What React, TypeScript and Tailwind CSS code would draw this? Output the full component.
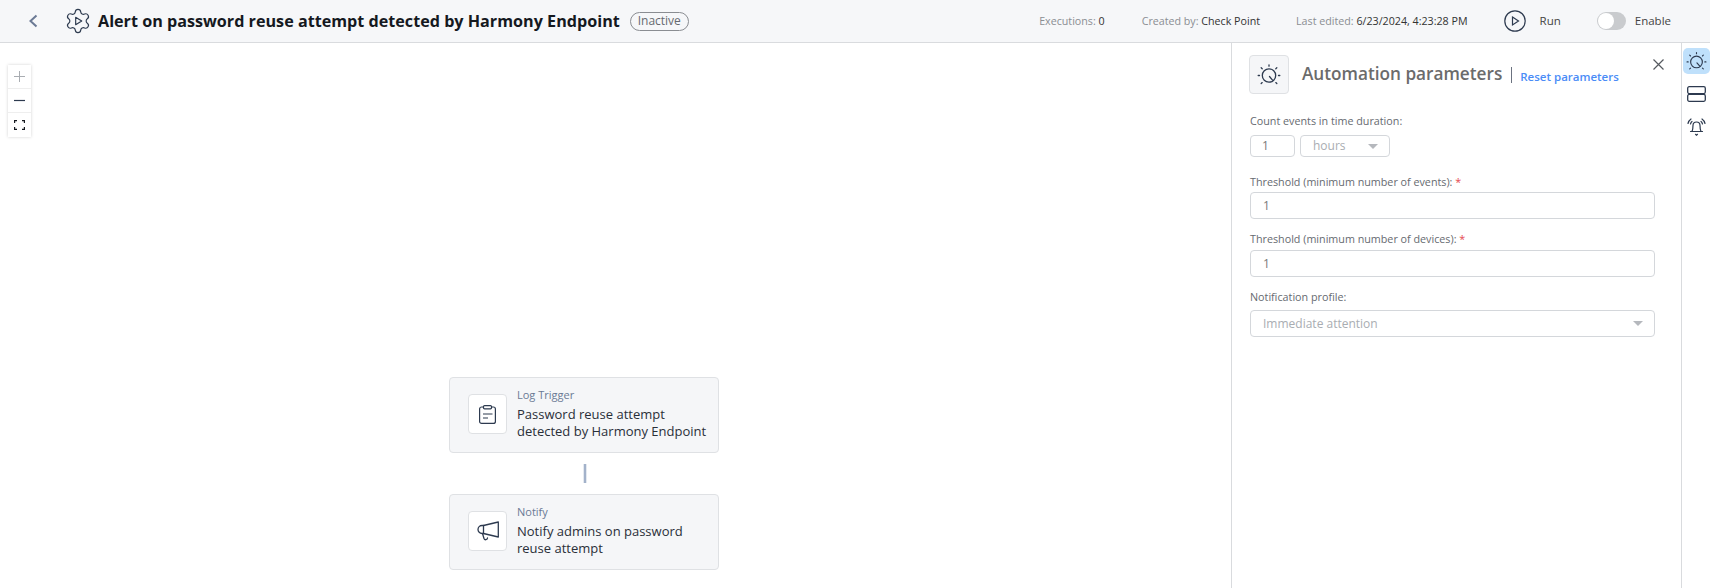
import React from "react";

const Knob = ({ size = 24 }: { size?: number }) => (
  <svg width={size} height={size} viewBox="0 0 24 24" fill="none" stroke="#2d3a4f" strokeWidth="1.3" strokeLinecap="round">
    <circle cx="12" cy="12.500" r="6.700" />
    <path d="M12.500 13.500l3 3.600" />
    <path d="M12 1.800v1.400M4.200 4.800l1 .9M19.800 4.800l-1 .9M1.200 12.500h1.300M21.500 12.500h1.300M4.200 20.500l1-.9M19.800 20.500l-1-.9" />
  </svg>
);

const Field = ({ children }: { children: React.ReactNode }) => (
  <div className="h-[27px] border border-[#d4d7db] rounded-[4px] bg-white flex items-center pl-[12px] text-[12px] text-[#7a7a7a]">
    {children}
  </div>
);

const Caret = () => <span className="w-0 h-0 border-x-[5px] border-x-transparent border-t-[5px] border-t-[#b5b8bd]" />;

const Label = ({ className, children }: { className: string; children: React.ReactNode }) => (
  <div className={`text-[10.75px] leading-[16px] text-[#666a70] whitespace-nowrap ${className}`}>{children}</div>
);

const Node = ({ type, title, icon }: { type: string; title: React.ReactNode; icon: React.ReactNode }) => (
  <div className="w-[270px] h-[76px] bg-[#f5f6f8] border border-[#dfe1e4] rounded-[4px] flex pl-[18px] pt-[16px]">
    <div className="w-[39px] h-[40px] bg-white border border-[#dfe1e4] rounded-[4px] flex items-center justify-center shrink-0">{icon}</div>
    <div className="ml-[10px] -mt-[8px]">
      <div className="text-[11px] leading-[16px] text-[#6b7a95] mt-[1px]">{type}</div>
      <div className="text-[13px] leading-[17.300px] text-[#2a2f38] font-medium mt-[3px] whitespace-nowrap">{title}</div>
    </div>
  </div>
);

export default function App() {
  return (
    <div className="w-[1710px] h-[588px] overflow-hidden bg-white flex flex-col font-['Open_Sans','Noto_Sans',sans-serif]">
      <header className="h-[43px] shrink-0 bg-[#f6f7f9] border-b border-[#d9dbde] flex items-center">
        <svg className="ml-[28px]" width="10" height="14" viewBox="0 0 10 14" fill="none" stroke="#6b7a95" strokeWidth="2">
          <path d="M8.500 1.500L2.500 7l6 5.500" />
        </svg>
        <svg className="ml-[26px]" width="28" height="28" viewBox="0 0 24 24" fill="none" stroke="#2d3a4f" strokeWidth="1" strokeLinejoin="round">
          <path d="M9.671 4.136a2.340 2.340 0 0 1 4.659 0 2.340 2.340 0 0 0 3.319 1.915 2.340 2.340 0 0 1 2.330 4.033 2.340 2.340 0 0 0 0 3.831 2.340 2.340 0 0 1-2.330 4.033 2.340 2.340 0 0 0-3.319 1.915 2.340 2.340 0 0 1-4.659 0 2.340 2.340 0 0 0-3.320-1.915 2.340 2.340 0 0 1-2.330-4.033 2.340 2.340 0 0 0 0-3.831A2.340 2.340 0 0 1 6.350 6.051a2.340 2.340 0 0 0 3.319-1.915" />
          <path d="M10 8.800l5.200 3.200-5.200 3.200z" />
        </svg>
        <h1 className="ml-[6px] text-[16.170px] font-bold text-[#15191f] whitespace-nowrap">Alert on password reuse attempt detected by Harmony Endpoint</h1>
        <span className="ml-[10px] h-[19px] w-[59px] justify-center flex items-center rounded-full border border-[#8a8d92] text-[12px] text-[#666a70]">Inactive</span>
        <div className="ml-auto flex items-center text-[10.700px] text-[#8b8e93]">
          <span>Executions: <span className="text-[#333]">0</span></span>
          <span className="ml-[37px]">Created by: <span className="text-[#333]">Check Point</span></span>
          <span className="ml-[36px]">Last edited: <span className="text-[#333]">6/23/2024, 4:23:28 PM</span></span>
        </div>
        <svg className="ml-[36px]" width="22" height="22" viewBox="0 0 22 22" fill="none" stroke="#2d3a4f" strokeWidth="1.200">
          <circle cx="11" cy="11" r="10.200" />
          <path d="M8.500 7l6 4-6 4z" />
        </svg>
        <span className="ml-[14px] text-[11.500px] text-[#444]">Run</span>
        <span className="ml-[36px] w-[29px] h-[18px] rounded-full bg-[#c9cbce] relative">
          <span className="absolute left-[1px] top-[1px] w-[16px] h-[16px] rounded-full bg-white" />
        </span>
        <span className="ml-[9px] mr-[39px] text-[11.500px] text-[#444]">Enable</span>
      </header>

      <div className="flex-1 flex min-h-0">
        <main className="w-[1231px] relative">
          <div className="absolute left-[8px] top-[22px] w-[23px] bg-white shadow-[0_0_3px_rgba(0,0,0,0.18)] flex flex-col items-center">
            <div className="h-[24px] w-full flex items-center justify-center border-b border-[#eeeeee]">
              <svg width="11" height="11" viewBox="0 0 11 11" stroke="#a9adb2" strokeWidth="1"><path d="M5.500 0v11M0 5.500h11" /></svg>
            </div>
            <div className="h-[24px] w-full flex items-center justify-center border-b border-[#eeeeee]">
              <svg width="11" height="11" viewBox="0 0 11 11" stroke="#2d3a4f" strokeWidth="1.200"><path d="M0 5.500h11" /></svg>
            </div>
            <div className="h-[24px] w-full flex items-center justify-center">
              <svg width="11" height="10" viewBox="0 0 11 10" fill="none" stroke="#15191f" strokeWidth="1.200"><path d="M0.600 3V.6H3M8 .6h2.400V3M10.400 7v2.400H8M3 9.400H.6V7" /></svg>
            </div>
          </div>
          <div className="ml-[449px] pt-[334px] flex flex-col">
            <Node
              type="Log Trigger"
              title={<>Password reuse attempt<br />detected by Harmony Endpoint</>}
              icon={
                <svg width="17" height="19" viewBox="0 0 17 19" fill="none" stroke="#2d3a4f" strokeWidth="1.200">
                  <rect x="0.600" y="2" width="15.800" height="16.400" rx="2" />
                  <rect x="4.500" y="0.600" width="8" height="3.200" rx="1" fill="#ffffff" />
                  <path d="M4 9h9.500M4 13h5" />
                </svg>
              }
            />
            <div className="ml-[134px] w-[4px] h-[19px] my-[11px] bg-[#a3b2ca] border-x border-[#e4e9f0]" />
            <Node
              type="Notify"
              title={<>Notify admins on password<br />reuse attempt</>}
              icon={
                <svg width="22" height="20" viewBox="0 0 22 20" fill="none" stroke="#2d3a4f" strokeWidth="1.300" strokeLinejoin="round" strokeLinecap="round">
                  <path d="M21.300 1v15L6.500 12.500H5a4 4 0 0 1 0-8h1.500z" />
                  <path d="M6.500 4.500v8M5.500 12.500l1.500 5a1.800 1.800 0 0 0 3.500-.5" />
                </svg>
              }
            />
          </div>
        </main>

        <aside className="w-[451px] border-x border-[#d9dbde] pl-[18px] pr-[26px] pt-[12px] relative">
          <div className="flex items-start -ml-[1px]">
            <div className="w-[40px] h-[39px] bg-[#f5f6f8] border border-[#dfe1e4] rounded-[4px] flex items-center justify-center"><Knob /></div>
            <span className="ml-[13px] mt-[6px] text-[17.200px] font-semibold text-[#6b6b6b] whitespace-nowrap">Automation parameters</span>
            <span className="ml-[9px] mt-[12px] w-[1px] h-[16px] bg-[#6b7280]" />
            <span className="ml-[8px] mt-[13px] text-[11.500px] font-semibold text-[#4a8cf7] whitespace-nowrap">Reset parameters</span>
          </div>
          <svg className="absolute right-[16px] top-[15px]" width="13" height="13" viewBox="0 0 13 13" stroke="#55595f" strokeWidth="1.200"><path d="M1.500 1.500l10 10M11.500 1.500l-10 10" /></svg>

          <Label className="mt-[19px]">Count events in time duration:</Label>
          <div className="mt-[6px] flex gap-[5px]">
            <div className="w-[45px] h-[22px] border border-[#d4d7db] rounded-[4px] flex items-center pl-[11px] text-[12px] text-[#7a7a7a]">1</div>
            <div className="w-[90px] h-[22px] border border-[#d4d7db] rounded-[4px] flex items-center pl-[12px] pr-[11px] justify-between text-[12px] text-[#a9adb2]">hours<Caret /></div>
          </div>

          <Label className="mt-[17px]">Threshold (minimum number of events): <span className="text-[#e5484d]">*</span></Label>
          <div className="mt-[2px]"><Field>1</Field></div>

          <Label className="mt-[12px]">Threshold (minimum number of devices): <span className="text-[#e5484d]">*</span></Label>
          <div className="mt-[3px]"><Field>1</Field></div>

          <Label className="mt-[12px]">Notification profile:</Label>
          <div className="mt-[5px]">
            <Field><span className="text-[#a9adb2] flex-1">Immediate attention</span><span className="mr-[11px] flex"><Caret /></span></Field>
          </div>
        </aside>

        <nav className="flex-1 flex flex-col pl-[1px] pt-[5px]">
          <div className="w-[27px] h-[26px] rounded-[5px] bg-[#bfe0fb] flex items-center justify-center"><Knob size={21} /></div>
          <svg className="mt-[12px] ml-[4px]" width="19" height="16" viewBox="0 0 19 16" fill="none" stroke="#2d3a4f" strokeWidth="1.300">
            <rect x="0.700" y="0.700" width="17.600" height="6.900" rx="1.500" />
            <rect x="0.700" y="8.400" width="17.600" height="6.900" rx="1.500" />
          </svg>
          <svg className="mt-[15px] ml-[4px]" width="19" height="19" viewBox="0 0 19 19" fill="none" stroke="#2d3a4f" strokeWidth="1.200" strokeLinecap="round">
            <path d="M5 14.500C5.800 12.500 6 10.500 6 8.500a3.500 3.500 0 0 1 7 0c0 2 .2 4 1 6z" />
            <path d="M3.500 14.500h12M8.500 17.300l1 .9 1-.9" />
            <path d="M1 6.500C1.500 4.500 2.500 3 4 2M3.500 7C3.800 6 4.300 5 5 4.500M18 6.500C17.500 4.500 16.500 3 15 2M15.500 7C15.200 6 14.700 5 14 4.500" />
          </svg>
        </nav>
      </div>
    </div>
  );
}
